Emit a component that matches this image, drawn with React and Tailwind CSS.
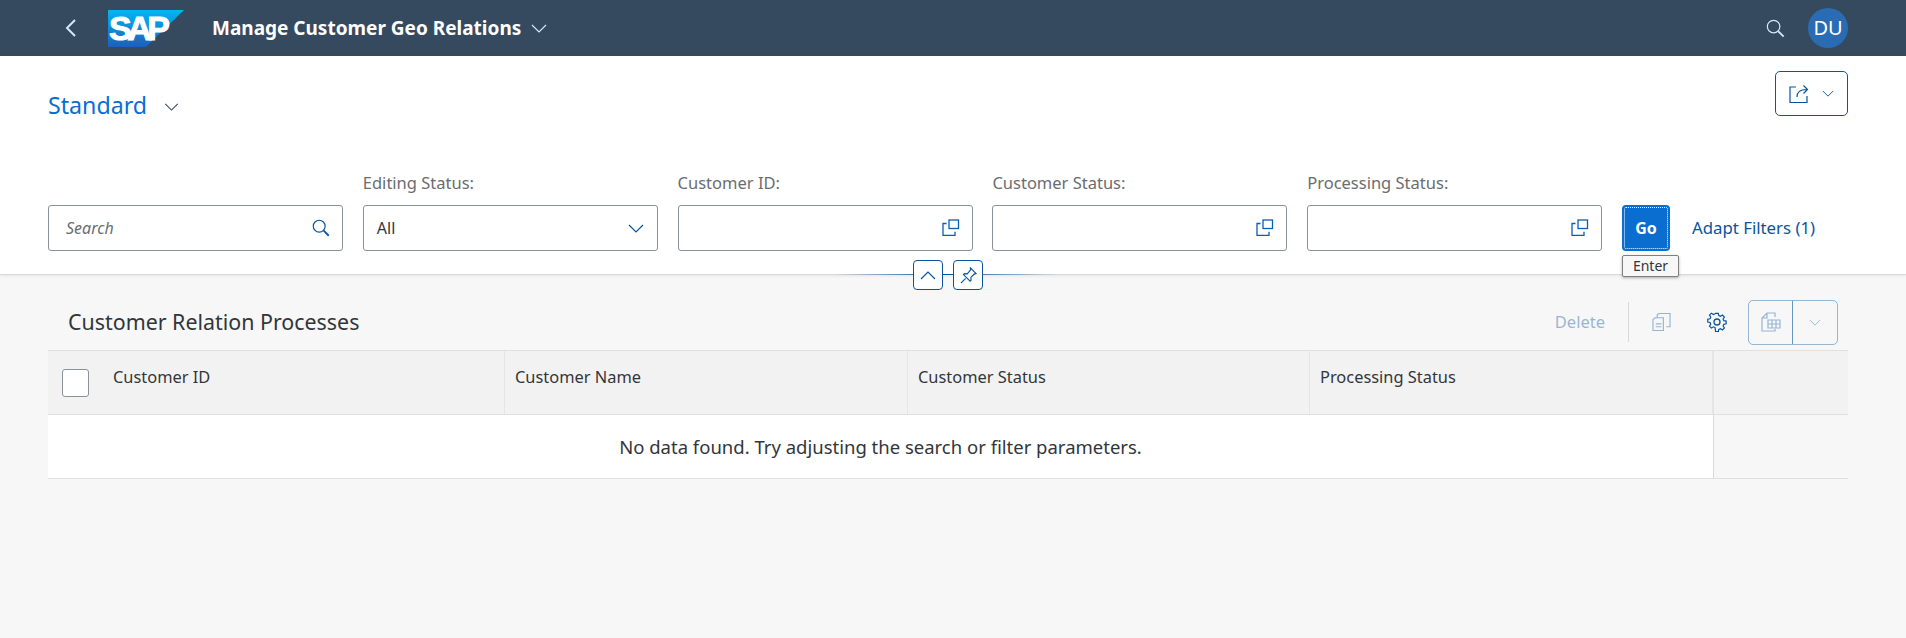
import React from 'react';

const FONT = 'font-["Noto_Sans","Open_Sans",sans-serif]';

function Chevron({ className = '', up = false }) {
  return (
    <svg viewBox="0 0 16 9" fill="none" stroke="currentColor" strokeWidth="1.2" className={className}>
      <path d={up ? 'M1 8l7-7 7 7' : 'M1 1l7 7 7-7'} />
    </svg>
  );
}

function SearchIcon({ className = '' }) {
  return (
    <svg viewBox="0 0 20 20" fill="none" stroke="currentColor" strokeWidth="1.3" className={className}>
      <circle cx="8" cy="8" r="6.6" />
      <path d="M13 13l5.6 5.6" strokeWidth="2" />
    </svg>
  );
}

function ValueHelp() {
  return (
    <svg viewBox="0 0 18 18" fill="none" stroke="#0a5fb0" strokeWidth="1.3" className="w-[18px] h-[18px]">
      <path d="M4.5 4.5H1v11.8h12v-3.5" />
      <rect x="7" y="1" width="9.5" height="8.5" />
    </svg>
  );
}

function FilterField({ label, children }) {
  return (
    <div className="w-[295px] mr-[19.800px] shrink-0">
      <div className="text-[16.500px] leading-[22px] text-[#6a6d70] mb-[11px] h-[22px]">{label}</div>
      {children}
    </div>
  );
}

function ValueHelpInput() {
  return (
    <div className="h-[46px] bg-white border border-[#89919a] rounded-[3px] flex items-center justify-end pr-[12px]">
      <ValueHelp />
    </div>
  );
}

function SapLogo() {
  return (
    <div className="relative w-[76px] h-[37px] ml-[32px] shrink-0">
      <svg viewBox="0 0 76 37" className="absolute inset-0 w-full h-full">
        <defs>
          <linearGradient id="sapGrad" x1="0" y1="0" x2="0" y2="1">
            <stop offset="0" stopColor="#00b8f1" />
            <stop offset="1" stopColor="#1e5fbb" />
          </linearGradient>
        </defs>
        <polygon points="0,0 76,0 38,37 0,37" fill="url(#sapGrad)" />
      </svg>
      <span className='absolute left-[1px] top-[1px] text-white font-bold text-[34px] leading-[34px] tracking-[-4.500px] [-webkit-text-stroke:1px_white] font-["Liberation_Sans",sans-serif]'>SAP</span>
    </div>
  );
}

function ShellBar() {
  return (
    <header className="h-[56px] bg-[#354a5f] flex items-center shrink-0">
      <svg viewBox="0 0 11 18" fill="none" stroke="#d1e8ff" strokeWidth="2" className="w-[11px] h-[18px] ml-[65px]">
        <path d="M10 1L2 9l8 8" />
      </svg>
      <SapLogo />
      <span className="ml-[28px] text-white font-bold text-[19px]">Manage Customer Geo Relations</span>
      <Chevron className="w-[16px] h-[9px] ml-[10px] text-[#d1e8ff]" />
      <div className="ml-auto flex items-center mr-[58px]">
        <SearchIcon className="w-[19px] h-[19px] text-[#d1e8ff]" />
        <div className="ml-[23px] w-[40px] h-[40px] rounded-full bg-[#2a6cb4] text-white text-[20px] flex items-center justify-center">DU</div>
      </div>
    </header>
  );
}

function FilterBar() {
  return (
    <section className="relative bg-white h-[219px] border-b border-[#d9d9d9] shadow-[0_1px_3px_rgba(0,0,0,0.08)] px-[48px] shrink-0">
      <div className="flex justify-between pt-[15px]">
        <div className="flex items-center h-[68px]">
          <span className="text-[23.200px] text-[#0a6ed1]">Standard</span>
          <Chevron className="w-[15px] h-[8px] ml-[17px] mt-[4px] text-[#354a5f]" />
        </div>
        <button className="mr-[10px] w-[73px] h-[45px] border border-[#0854a0] rounded-[5px] flex items-center justify-center gap-[13px]">
          <svg viewBox="0 0 20 20" fill="none" stroke="#0854a0" strokeWidth="1.2" className="w-[20px] h-[20px]">
            <path d="M7 3H1v15.5h17V12" />
            <path d="M8 13c0-5 3-7.5 10-7.5M14.5 1.5l4 4-4 4" />
          </svg>
          <Chevron className="w-[12px] h-[7px] text-[#0854a0]" />
        </button>
      </div>
      <div className="flex items-end mt-[33px]">
        <div className="w-[295px] mr-[19.800px] shrink-0 h-[46px] bg-white border border-[#89919a] rounded-[3px] flex items-center justify-between pl-[17px] pr-[12px]">
          <span className="italic text-[16px] text-[#6a6d70]">Search</span>
          <SearchIcon className="w-[18px] h-[18px] text-[#0854a0]" />
        </div>
        <FilterField label="Editing Status:">
          <div className="h-[46px] bg-white border border-[#89919a] rounded-[3px] flex items-center justify-between pl-[13px] pr-[13px] text-[16px] text-[#32363a]">
            All
            <Chevron className="w-[16px] h-[9px] text-[#0854a0]" />
          </div>
        </FilterField>
        <FilterField label="Customer ID:"><ValueHelpInput /></FilterField>
        <FilterField label="Customer Status:"><ValueHelpInput /></FilterField>
        <FilterField label="Processing Status:"><ValueHelpInput /></FilterField>
        <div className="relative">
          <button className="w-[48px] h-[46px] bg-[#0a6ed1] rounded-[4px] p-[2px]">
            <span className="flex items-center justify-center w-full h-full border border-dotted border-white rounded-[2px] text-white font-bold text-[16px]">Go</span>
          </button>
          <div className="absolute left-0 top-[50px] w-[57px] h-[22px] bg-[#f7f7f7] border border-[#7f7f7f] rounded-[2px] shadow-[0_1px_3px_rgba(0,0,0,0.3)] text-[14px] leading-[20px] text-center text-[#32363a]">Enter</div>
        </div>
        <span className="ml-[22px] h-[46px] flex items-center text-[16.800px] text-[#0854a0]">Adapt Filters (1)</span>
      </div>
      <div className="absolute left-[835px] top-[218px] w-[222px] h-[1px] bg-gradient-to-r from-transparent via-[#0854a0] to-transparent" />
      <div className="absolute left-[913px] top-[204px] flex gap-[10px]">
        <button className="w-[30px] h-[30px] bg-white border border-[#0854a0] rounded-[4px] flex items-center justify-center">
          <Chevron up className="w-[16px] h-[9px] text-[#0854a0]" />
        </button>
        <button className="w-[30px] h-[30px] bg-white border border-[#0854a0] rounded-[4px] flex items-center justify-center">
          <svg viewBox="0 0 18 18" fill="none" stroke="#0854a0" strokeWidth="1.2" className="w-[17px] h-[17px]">
            <path d="M11 1l6 6-2 .5-3.5 3.5.2 3-1 1-7-7 1-1 3 .2L11.200 3z" />
            <path d="M6 12l-5 5" />
          </svg>
        </button>
      </div>
    </section>
  );
}

function TableToolbar() {
  return (
    <div className="h-[75px] ml-[48px] mr-[68px] pl-[20px] pt-[19px] flex items-center justify-between">
      <span className="text-[21.400px] text-[#32363a]">Customer Relation Processes</span>
      <div className="flex items-center">
        <span className="text-[16.500px] text-[#0854a0] opacity-40">Delete</span>
        <div className="w-px h-[40px] bg-[#d9d9d9] ml-[23px]" />
        <svg viewBox="0 0 20 20" fill="none" stroke="#0854a0" strokeWidth="1.200" className="w-[19px] h-[20px] ml-[23px] opacity-40">
          <path d="M3 5.500h9v13.500H1V7.500zM5.500 5V2.500l2-1.500H19v14h-4M4 12h6M4 15h6" />
        </svg>
        <svg viewBox="0 0 20 20" fill="none" stroke="#0854a0" strokeWidth="1.300" className="w-[20px] h-[20px] ml-[36px]">
          <circle cx="10" cy="10" r="3" />
          <path d="M8.500 1h3l.5 2.500 1.800.8 2.200-1.400 2.100 2.100-1.400 2.200.8 1.800 2.500.5v3l-2.500.5-.8 1.800 1.400 2.200-2.100 2.100-2.200-1.400-1.800.8-.5 2.500h-3L8 16.500l-1.800-.8L4 17.100 1.900 15l1.400-2.200-.8-1.800L0 10.500v-3L2.500 7l.8-1.800L1.900 3 4 .900l2.200 1.400L8 1.500z" transform="translate(0 0) scale(0.92) translate(.8 .4)" />
        </svg>
        <div className="ml-[21px] flex w-[90px] h-[45px] border border-[#0854a0]/40 rounded-[5px]">
          <div className="w-[44px] border-r border-[#0854a0]/60 flex items-center justify-center">
            <svg viewBox="0 0 20 20" fill="none" stroke="#0854a0" strokeWidth="1.200" className="w-[20px] h-[20px] opacity-40">
              <path d="M14 5V1H6L1 6v13h13v-2M6 1v5H1" />
              <path d="M7 8h12v8H7zM7 12h12M11 8v8M15 8v8" />
            </svg>
          </div>
          <div className="flex-1 flex items-center justify-center">
            <Chevron className="w-[12px] h-[7px] text-[#0854a0] opacity-40" />
          </div>
        </div>
      </div>
    </div>
  );
}

function HeaderCell({ children, className = '' }) {
  return (
    <div className={`pl-[10px] pt-[14px] border-r border-[#e5e5e5] text-[16.400px] leading-[24px] text-[#32363a] ${className}`}>
      {children}
    </div>
  );
}

function DataTable() {
  return (
    <div className="mr-[58px] ml-[48px]">
      <div className="grid grid-cols-[457px_403px_402px_404px_1fr] h-[65px] bg-[#f2f2f2] border-t border-b border-[#e0e0e0]">
        <div className="flex border-r border-[#e5e5e5]">
          <div className="ml-[14px] mt-[18px] w-[27px] h-[28px] bg-white border border-[#89919a] rounded-[3px]" />
          <div className="ml-[24px] pt-[14px] text-[16.400px] leading-[24px] text-[#32363a]">Customer ID</div>
        </div>
        <HeaderCell>Customer Name</HeaderCell>
        <HeaderCell>Customer Status</HeaderCell>
        <HeaderCell className="border-r-[2px] border-[#dedede]">Processing Status</HeaderCell>
        <div />
      </div>
      <div className="grid grid-cols-[1666px_1fr] h-[64px] border-b border-[#e0e0e0]">
        <div className="bg-white border-r border-[#d9d9d9] flex items-center justify-center text-[18.500px] text-[#32363a]">
          No data found. Try adjusting the search or filter parameters.
        </div>
        <div />
      </div>
    </div>
  );
}

export default function App() {
  return (
    <div className={`h-[638px] w-full overflow-hidden bg-[#f7f7f7] flex flex-col ${FONT}`}>
      <ShellBar />
      <FilterBar />
      <TableToolbar />
      <DataTable />
    </div>
  );
}
